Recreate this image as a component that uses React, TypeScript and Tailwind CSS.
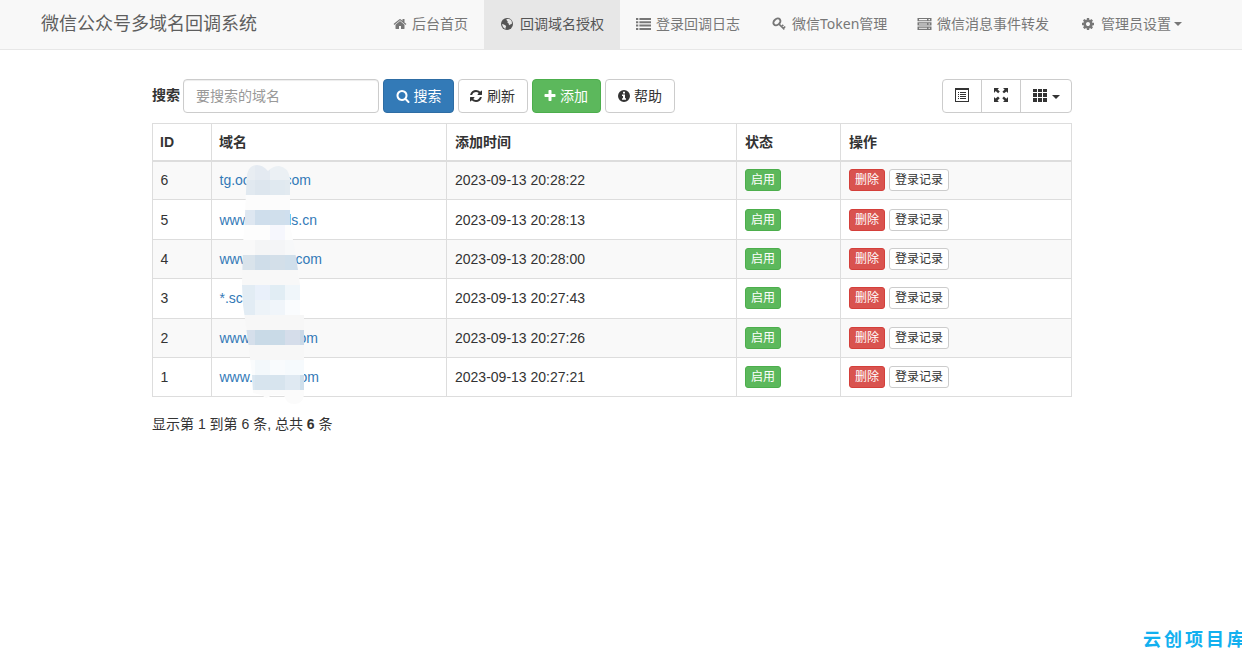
import type { ReactNode } from 'react';
import { clsx } from 'clsx';

const paths = {
  home: 'M1472 992v480q0 26-19 45t-45 19h-384v-384h-256v384h-384q-26 0-45-19t-19-45v-480q0-1 .5-3t.5-3l575-474 575 474q1 2 1 6zm223-69l-62 74q-8 9-21 11h-3q-13 0-21-7l-692-577-692 577q-12 8-24 7-13-2-21-11l-62-74q-8-10-7-23.5t11-21.5l719-599q32-26 76-26t76 26l244 204v-195q0-14 9-23t23-9h192q14 0 23 9t9 23v408l219 182q10 8 11 21.5t-7 23.5z',
  cog: 'M1152 896q0-106-75-181t-181-75-181 75-75 181 75 181 181 75 181-75 75-181zm512-109v222q0 12-8 23t-20 13l-185 28q-19 54-39 91 35 50 107 138 10 12 10 25t-9 23q-27 37-99 108t-94 71q-12 0-26-9l-138-108q-44 23-91 38-16 136-29 186-7 28-36 28h-222q-14 0-24.5-8.5t-11.5-21.5l-28-184q-49-16-90-37l-141 107q-10 9-25 9-14 0-25-11-126-114-165-168-7-10-7-23 0-12 8-23 15-21 51-66.5t54-70.5q-27-50-41-99l-183-27q-13-2-21-12.5t-8-23.5v-222q0-12 8-23t19-13l186-28q14-46 39-92-40-57-107-138-10-12-10-24 0-10 9-23 26-36 98.5-107.5t94.5-71.5q13 0 26 10l138 107q44-23 91-38 16-136 29-186 7-28 36-28h222q14 0 24.5 8.5t11.5 21.5l28 184q49 16 90 37l142-107q9-9 24-9 13 0 25 10 129 119 165 170 7 8 7 22 0 12-8 23-15 21-51 66.5t-54 70.5q26 50 41 98l183 28q13 2 21 12.5t8 23.5z',
  search: 'M1216 832q0-185-131.5-316.5t-316.5-131.5-316.5 131.5-131.5 316.5 131.5 316.5 316.5 131.5 316.5-131.5 131.5-316.5zm512 832q0 52-38 90t-90 38q-54 0-90-38l-343-342q-179 124-399 124-143 0-273.5-55.5t-225-150-150-225-55.5-273.5 55.5-273.5 150-225 225-150 273.5-55.5 273.5 55.5 225 150 150 225 55.5 273.5q0 220-124 399l343 343q37 37 37 90z',
  refresh: 'M1639 1056q0 5-1 7-64 268-268 434.5t-478 166.5q-146 0-282.5-55t-243.5-157l-129 129q-19 19-45 19t-45-19-19-45v-448q0-26 19-45t45-19h448q26 0 45 19t19 45-19 45l-137 137q71 66 161 102t187 36q134 0 250-65t186-179q11-17 53-117 8-23 30-23h192q13 0 22.5 9.5t9.5 22.5zm25-800v448q0 26-19 45t-45 19h-448q-26 0-45-19t-19-45 19-45l138-138q-148-137-349-137-134 0-250 65t-186 179q-11 17-53 117-8 23-30 23h-199q-13 0-22.5-9.5t-9.5-22.5v-7q65-268 270-434.5t480-166.5q146 0 284 55.5t245 156.5l130-129q19-19 45-19t45 19 19 45z',
  plus: 'M1600 736v192q0 40-28 68t-68 28h-416v416q0 40-28 68t-68 28h-192q-40 0-68-28t-28-68v-416h-416q-40 0-68-28t-28-68v-192q0-40 28-68t68-28h416v-416q0-40 28-68t68-28h192q40 0 68 28t28 68v416h416q40 0 68 28t28 68z',
};

function Icon({ name, className = 'w-3.5 h-3.5' }: { name: keyof typeof paths; className?: string }) {
  return (
    <svg viewBox="0 0 1792 1792" fill="currentColor" className={clsx('shrink-0', className)}>
      <path d={paths[name]} />
    </svg>
  );
}

function GlobeIcon() {
  return (
    <svg viewBox="0 0 12 12" className="w-3 h-3 shrink-0 ml-px">
      <circle cx="6" cy="6" r="6" fill="currentColor" />
      <path d="M5.4 1.1 8 .9l1.7.9 1.2 2-.1 2.2-1.3.2-.6 1-1.1-.7-.3-1.3-1.2-.6.5-1.2-1-.9zM1.1 6l1.2.3 1.5.8 1.4.9-.5 1.2-.3 1.7-1.5-.8-1.3-1.8z" fill="#e7e7e7" />
    </svg>
  );
}

function ListIcon() {
  return (
    <svg viewBox="0 0 15 12" fill="currentColor" className="w-[15px] h-3 shrink-0">
      <path d="M0 0h2.3v2H0zM3.4 0H15v2H3.4zM0 3.3h2.3v2H0zM3.4 3.3H15v2H3.4zM0 6.6h2.3v2H0zM3.4 6.6H15v2H3.4zM0 9.9h2.3v2H0zM3.4 9.9H15v2H3.4z" />
    </svg>
  );
}

function KeyIcon() {
  return (
    <svg viewBox="0 0 14 14" fill="none" stroke="currentColor" className="w-3.5 h-3.5 shrink-0">
      <ellipse cx="4.9" cy="4.9" rx="3.9" ry="2.9" strokeWidth="1.9" transform="rotate(-40 4.9 4.9)" />
      <path d="m7 7.2 5.4 5.2M9.4 9.8l1.9-1.9M11.3 11.4l1.9-1.9" strokeWidth="1.6" />
    </svg>
  );
}

function TasksIcon() {
  return (
    <svg viewBox="0 0 15 12" fill="currentColor" className="w-[15px] h-3 shrink-0">
      <path fillRule="evenodd" d="M.5 0h14v3.3H.5zM2 1.1v1.1h8V1.1zM11.5 1.1v1.1h1.5V1.1zM.5 4.3h14v3.3H.5zM2 5.4v1.1h8V5.4zM11.5 5.4v1.1h1.5V5.4zM.5 8.6h14v3.3H.5zM2 9.7v1.1h8V9.7zM11.5 9.7v1.1h1.5V9.7z" />
    </svg>
  );
}

function InfoIcon() {
  return (
    <svg viewBox="0 0 12 12" className="w-3 h-3 shrink-0">
      <path fill="currentColor" fillRule="evenodd" d="M6 0a6 6 0 1 0 0 12A6 6 0 0 0 6 0zM5 1.7h2v1.7H5zM4 4.4h3v3.9h1v1.5H4V8.3h1V5.9H4z" />
    </svg>
  );
}

function Caret({ className }: { className?: string }) {
  return <span className={clsx('inline-block border-x-4 border-t-4 border-x-transparent', className)} />;
}

const navItems: { label: string; icon: ReactNode; width: string; active?: boolean; caret?: boolean }[] = [
  { label: '后台首页', icon: <Icon name="home" className="w-3.5 h-3.5 ml-px" />, width: 'w-[108px]' },
  { label: '回调域名授权', icon: <GlobeIcon />, width: 'w-[136px]', active: true },
  { label: '登录回调日志', icon: <ListIcon />, width: 'w-[136px]' },
  { label: '微信Token管理', icon: <KeyIcon />, width: 'w-[145px]' },
  { label: '微信消息事件转发', icon: <TasksIcon />, width: 'w-[164px]' },
  { label: '管理员设置', icon: <Icon name="cog" />, width: 'w-[132px]', caret: true },
];

const rows = [
  { id: 6, head: 'tg.oc', tail: 'com', gap: 'w-[65px]', time: '2023-09-13 20:28:22' },
  { id: 5, head: 'www.', tail: 'ds.cn', gap: 'w-[64px]', time: '2023-09-13 20:28:13' },
  { id: 4, head: 'www.', tail: 'com', gap: 'w-[76px]', time: '2023-09-13 20:28:00' },
  { id: 3, head: '*.sc', tail: '', gap: 'w-[80px]', time: '2023-09-13 20:27:43' },
  { id: 2, head: 'www.', tail: 'om', gap: 'w-[79px]', time: '2023-09-13 20:27:26' },
  { id: 1, head: 'www.', tail: 'om', gap: 'w-[80px]', time: '2023-09-13 20:27:21' },
];

// mosaic tiles, 15px each
const tiles = [
  ['#e8edf2', '#e4eaf1', '#ebf0f4', '#ebf0f4', '#ebf0f4'],
  ['#e1e9f0', '#dde6ee', '#e0e9f0', '#e2eaf0', '#e2eaf0'],
  ['#fcfcfc', '#fcfcfc', '#fcfcfc', '#fcfcfc', '#fcfcfc'],
  ['#dee7f1', '#cfdeec', '#d0dfec', '#cfdfee', '#cfdfee'],
  ['#fdfdfd', '#fdfdfd', '#f6f7fd', '#fdfdfd', '#fdfdfd'],
  ['#f9f9f9', '#f4f5f6', '#f4f5f7', '#f7f8f9', '#f7f8f9'],
  ['#d9e3eb', '#cfdde9', '#d3dfe9', '#d0dfeb', '#d0dfeb'],
  ['#f8f8f8', '#f8f8f8', '#f8f8f8', '#f8f8f8', '#f8f8f8'],
  ['#e2ecf4', '#e9f0fa', '#e1edf4', '#f0f6fa', '#f0f6fa'],
  ['#e2ecf4', '#edf3f8', '#f0f5fa', '#fafcfe', '#fafcfe'],
  ['#f7f7f7', '#f7f7f7', '#f7f7f7', '#f7f7f7', '#f7f7f7'],
  ['#d5dfeb', '#c9dae7', '#c9dae7', '#d5ddea', '#cbd9e7'],
  ['#f7f7f7', '#f7f7f7', '#f7f7f7', '#f7f7f7', '#f7f7f7'],
  ['#fafcfd', '#f3f8fb', '#f9fbfd', '#f6fafd', '#f6fafd'],
  ['#dae7f1', '#d7e4ee', '#d7e4ee', '#dfe9f2', '#cfdfeb'],
  ['#fbfbfb', '#fbfbfb', '#fbfbfb', '#fbfbfb', '#fbfbfb'],
];

function Mosaic() {
  return (
    <svg viewBox="0 0 75 240" className="absolute left-[88px] top-[42px] w-[75px] h-[240px]">
      <clipPath id="smudge">
        <path d="M6.5 15Q7 0 17 0q6 0 11 6 5-5 11-5 9 1 11 12v47l4 20 4 25 2 15v30h4v80q-1 9-10 9-8 0-10-9H31q-2 3-5 3-2-1-4-3l-9-2-1-18-3-26-4-30-2-14-1-20 1-40 2-30z" />
      </clipPath>
      <g clipPath="url(#smudge)" shapeRendering="crispEdges">
        {tiles.map((row, y) =>
          row.map((color, x) => <rect key={`${x}-${y}`} x={x * 15} y={y * 15} width="15" height="15" fill={color} />)
        )}
      </g>
    </svg>
  );
}

const btn = 'h-[34px] rounded border flex items-center justify-center';
const btnXs = 'h-[22px] rounded-[3px] border px-[5px] text-xs leading-5 align-middle';
const cell = 'border border-[#ddd] pr-2 py-0 text-left';

export default function App() {
  return (
    <div className="relative w-full h-[665px] overflow-hidden bg-white text-sm leading-5 text-[#333] font-['Liberation_Sans','Noto_Sans_CJK_SC',sans-serif]">
      <nav className="h-[50px] bg-[#f8f8f8] border-b border-[#e7e7e7] flex pl-[41px] text-[#777] font-['Noto_Sans','Noto_Sans_CJK_SC',sans-serif]">
        <a className="w-[335px] text-lg leading-[47px] text-[#5e5e5e]">微信公众号多域名回调系统</a>
        {navItems.map((item) => (
          <a
            key={item.label}
            className={clsx(
              'h-[49px] pl-4 pb-0.5 flex items-center whitespace-nowrap shrink-0',
              item.width,
              item.active && 'bg-[#e7e7e7] text-[#555]'
            )}
          >
            <span className="w-5 flex shrink-0">{item.icon}</span>
            {item.label}
            {item.caret && <Caret className="ml-[3px]" />}
          </a>
        ))}
      </nav>

      <main className="ml-[152px] w-[920px] pt-[29px]">
        <div className="flex items-center gap-1">
          <label className="font-bold w-7 -mr-px -mt-0.5">搜索</label>
          <input placeholder="要搜索的域名" className="w-[196px] h-[34px] px-3 border border-[#ccc] rounded shadow-[inset_0_1px_1px_rgba(0,0,0,0.075)] placeholder:text-[#999]" />
          <button className={clsx(btn, 'w-[71px] gap-1 bg-[#337ab7] border-[#2e6da4] text-white')}>
            <Icon name="search" />搜索
          </button>
          <button className={clsx(btn, 'w-[70px] gap-1 pr-0.5 bg-white border-[#ccc]')}>
            <Icon name="refresh" />刷新
          </button>
          <button className={clsx(btn, 'w-[69px] gap-[3px] pr-0.5 bg-[#5cb85c] border-[#4cae4c] text-white')}>
            <Icon name="plus" />添加
          </button>
          <button className={clsx(btn, 'w-[70px] gap-1 bg-white border-[#ccc]')}>
            <InfoIcon />帮助
          </button>
          <div className="ml-auto h-[34px] flex border border-[#ccc] rounded divide-x divide-[#ccc]">
            <button className="w-[39px] flex items-center justify-center">
              <svg viewBox="0 0 14 14" fill="currentColor" className="w-3.5 h-3.5 -mt-0.5">
                <path fillRule="evenodd" d="M0 0h14v14H0zM1 2v11h12V2zM3 4h1v1H3zM5 4h6v1H5zM3 6h1v1H3zM5 6h6v1H5zM3 8h1v1H3zM5 8h6v1H5zM3 10h1v1H3zM5 10h6v1H5z" />
              </svg>
            </button>
            <button className="w-[39px] flex items-center justify-center">
              <svg viewBox="0 0 14 14" fill="currentColor" className="w-3.5 h-3.5 -mt-0.5">
                <path d="M0 0h5L3.6 1.4l2.2 2.2-1.7 1.7-2.4-2.4L0 5zM14 0v5l-1.6-1.6L10 5.3 8.4 3.7l2.2-2.3L9 0zM0 14V9l1.6 1.6L4 8.5l1.7 1.7-2.2 2.3L5 14zM14 14H9l1.5-1.5-2.2-2.3 1.6-1.6 2.4 2.2L14 9z" />
              </svg>
            </button>
            <button className="w-[50px] flex items-center justify-center gap-[5px]">
              <svg viewBox="0 0 14 14" fill="currentColor" className="w-3.5 h-3.5 -mt-0.5" shapeRendering="crispEdges">
                <path d="M0 1h4v3H0zM5 1h4v3H5zM10 1h4v3h-4zM0 5h4v4H0zM5 5h4v4H5zM10 5h4v4h-4zM0 10h4v4H0zM5 10h4v4H5zM10 10h4v4h-4z" />
              </svg>
              <Caret className="mt-0.5" />
            </button>
          </div>
        </div>

        <div className="relative mt-2.5">
          <table className="w-[920px] table-fixed border-collapse">
            <thead>
              <tr className="h-[37px]">
                <th className={clsx(cell, 'w-[59px] border-b-2 pl-[7px]')}>ID</th>
                <th className={clsx(cell, 'w-[235px] border-b-2 pl-[7px]')}>域名</th>
                <th className={clsx(cell, 'w-[290px] border-b-2 pl-2')}>添加时间</th>
                <th className={clsx(cell, 'w-[104px] border-b-2 pl-2')}>状态</th>
                <th className={clsx(cell, 'border-b-2 pl-2')}>操作</th>
              </tr>
            </thead>
            <tbody>
              {rows.map((row) => (
                <tr key={row.id} className="h-[39.4px] odd:bg-[#f9f9f9]">
                  <td className={clsx(cell, 'pl-[7.5px]')}>{row.id}</td>
                  <td className={clsx(cell, 'pl-[7.5px]')}>
                    <a className="flex text-[#337ab7]">
                      <span className={row.gap}>{row.head}</span>
                      {row.tail}
                    </a>
                  </td>
                  <td className={clsx(cell, 'pl-2')}>{row.time}</td>
                  <td className={clsx(cell, 'pl-2')}>
                    <div className="flex">
                      <button className={clsx(btnXs, 'bg-[#5cb85c] border-[#4cae4c] text-white')}>启用</button>
                    </div>
                  </td>
                  <td className={clsx(cell, 'pl-2')}>
                    <div className="flex gap-1">
                      <button className={clsx(btnXs, 'bg-[#d9534f] border-[#d43f3a] text-white')}>删除</button>
                      <button className={clsx(btnXs, 'bg-white border-[#ccc]')}>登录记录</button>
                    </div>
                  </td>
                </tr>
              ))}
            </tbody>
          </table>
          <Mosaic />
        </div>

        <p className="mt-[17px]">
          显示第 1 到第 6 条, 总共 <b>6</b> 条
        </p>
      </main>

      <div className="absolute left-[1143px] top-[628px] whitespace-nowrap text-[18px] leading-6 tracking-[3px] font-bold text-[#12b0ef]">云创项目库</div>
    </div>
  );
}
